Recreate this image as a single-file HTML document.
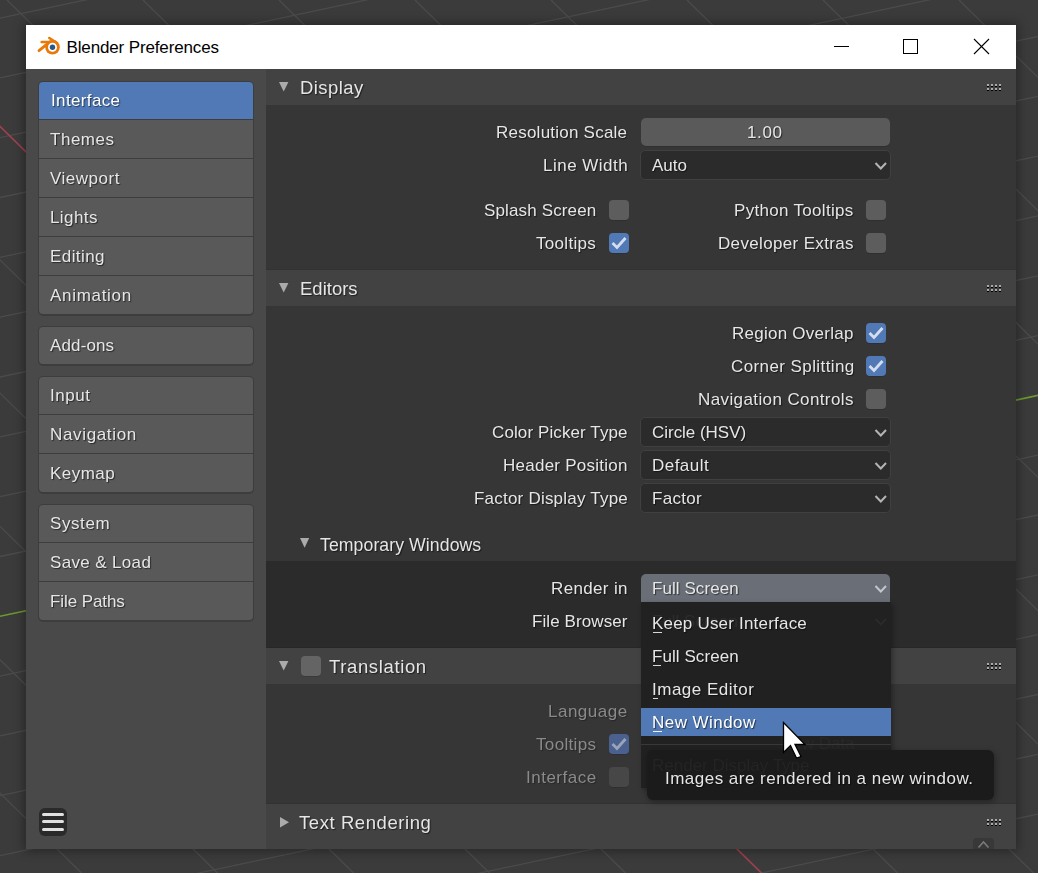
<!DOCTYPE html>
<html><head><meta charset="utf-8">
<style>
*{margin:0;padding:0;box-sizing:border-box}
html,body{width:1038px;height:873px;overflow:hidden;background:#3b3b3b;font-family:"Liberation Sans",sans-serif}
div{position:absolute}
#bg{position:absolute;left:0;top:0}
.t{color:#e6e6e6;font-size:17px;line-height:30px;height:28px;white-space:nowrap;will-change:transform;text-shadow:1px 1px 1px rgba(0,0,0,.55)}
.r{text-align:right}
.tab{left:39px;width:214px;background:#595959}
.grp{left:38px;width:216px;background:#3d3d3d;border-radius:5px}
.hdr{left:266px;width:750px;height:36px;background:#424242}
.tri{width:0;height:0;border-left:4.7px solid transparent;border-right:4.7px solid transparent;border-top:9.4px solid #ababab}
.trr{width:0;height:0;border-top:5px solid transparent;border-bottom:5px solid transparent;border-left:9px solid #ababab}
.dd{left:640px;width:251px;height:30px;margin-top:-1px;background:#2b2b2b;border:1px solid #404040;border-radius:5px}
.sl{left:641px;width:249px;height:28px;background:#5a5a5a;border-radius:5px;box-shadow:0 1px 0 rgba(0,0,0,.12)}
.cb{width:20px;height:20px;background:#5d5d5d;border-radius:4px;box-shadow:0 1px 0 rgba(0,0,0,.12)}
.cbx{background:#5079b5}
</style></head><body>
<svg id="bg" width="1038" height="873">
<line x1="0" y1="18.1" x2="1038" y2="-202.8" stroke="#4b4b4b" stroke-width="1.3"/>
<line x1="0" y1="77.9" x2="1038" y2="-143.0" stroke="#4b4b4b" stroke-width="1.3"/>
<line x1="0" y1="137.7" x2="1038" y2="-83.2" stroke="#4b4b4b" stroke-width="1.3"/>
<line x1="0" y1="197.5" x2="1038" y2="-23.3" stroke="#4b4b4b" stroke-width="1.3"/>
<line x1="0" y1="257.4" x2="1038" y2="36.5" stroke="#4b4b4b" stroke-width="1.3"/>
<line x1="0" y1="317.2" x2="1038" y2="96.3" stroke="#4b4b4b" stroke-width="1.3"/>
<line x1="0" y1="377.0" x2="1038" y2="156.1" stroke="#4b4b4b" stroke-width="1.3"/>
<line x1="0" y1="436.8" x2="1038" y2="215.9" stroke="#4b4b4b" stroke-width="1.3"/>
<line x1="0" y1="496.6" x2="1038" y2="275.8" stroke="#4b4b4b" stroke-width="1.3"/>
<line x1="0" y1="556.5" x2="1038" y2="335.6" stroke="#4b4b4b" stroke-width="1.3"/>
<line x1="0" y1="616.3" x2="1038" y2="395.4" stroke="#6c9a2c" stroke-width="1.6"/>
<line x1="0" y1="676.1" x2="1038" y2="455.2" stroke="#4b4b4b" stroke-width="1.3"/>
<line x1="0" y1="735.9" x2="1038" y2="515.0" stroke="#4b4b4b" stroke-width="1.3"/>
<line x1="0" y1="795.7" x2="1038" y2="574.9" stroke="#4b4b4b" stroke-width="1.3"/>
<line x1="0" y1="855.6" x2="1038" y2="634.7" stroke="#4b4b4b" stroke-width="1.3"/>
<line x1="0" y1="915.4" x2="1038" y2="694.5" stroke="#4b4b4b" stroke-width="1.3"/>
<line x1="0" y1="975.2" x2="1038" y2="754.3" stroke="#4b4b4b" stroke-width="1.3"/>
<line x1="0" y1="1035.0" x2="1038" y2="814.1" stroke="#4b4b4b" stroke-width="1.3"/>
<line x1="0" y1="1094.8" x2="1038" y2="874.0" stroke="#4b4b4b" stroke-width="1.3"/>
<line x1="0" y1="1154.7" x2="1038" y2="933.8" stroke="#4b4b4b" stroke-width="1.3"/>
<line x1="-1081.0" y1="0" x2="-190.5" y2="873" stroke="#4b4b4b" stroke-width="1.3"/>
<line x1="-945.0" y1="0" x2="-54.5" y2="873" stroke="#4b4b4b" stroke-width="1.3"/>
<line x1="-809.0" y1="0" x2="81.5" y2="873" stroke="#4b4b4b" stroke-width="1.3"/>
<line x1="-673.0" y1="0" x2="217.5" y2="873" stroke="#4b4b4b" stroke-width="1.3"/>
<line x1="-537.0" y1="0" x2="353.5" y2="873" stroke="#4b4b4b" stroke-width="1.3"/>
<line x1="-401.0" y1="0" x2="489.5" y2="873" stroke="#4b4b4b" stroke-width="1.3"/>
<line x1="-265.0" y1="0" x2="625.5" y2="873" stroke="#4b4b4b" stroke-width="1.3"/>
<line x1="-129.0" y1="0" x2="761.5" y2="873" stroke="#a04050" stroke-width="1.6"/>
<line x1="7.0" y1="0" x2="897.5" y2="873" stroke="#4b4b4b" stroke-width="1.3"/>
<line x1="143.0" y1="0" x2="1033.5" y2="873" stroke="#4b4b4b" stroke-width="1.3"/>
<line x1="279.0" y1="0" x2="1169.5" y2="873" stroke="#4b4b4b" stroke-width="1.3"/>
<line x1="415.0" y1="0" x2="1305.5" y2="873" stroke="#4b4b4b" stroke-width="1.3"/>
<line x1="551.0" y1="0" x2="1441.5" y2="873" stroke="#4b4b4b" stroke-width="1.3"/>
<line x1="687.0" y1="0" x2="1577.5" y2="873" stroke="#4b4b4b" stroke-width="1.3"/>
<line x1="823.0" y1="0" x2="1713.5" y2="873" stroke="#4b4b4b" stroke-width="1.3"/>
<line x1="959.0" y1="0" x2="1849.5" y2="873" stroke="#4b4b4b" stroke-width="1.3"/>

</svg>
<div style="left:26px;top:25px;width:990px;height:824px;background:#494949;box-shadow:0 0 10px 2px rgba(0,0,0,.35)"></div>
<div style="left:26px;top:25px;width:990px;height:44px;background:#ffffff"></div>
<svg style="position:absolute;left:34px;top:33px" width="30" height="26" viewBox="34 33 30 26">
  <g stroke="#e97a0a" stroke-linecap="round" fill="#e97a0a">
  <line x1="49.3" y1="38" x2="57" y2="43.2" stroke-width="2.6"/>
  <line x1="41.6" y1="41.9" x2="52" y2="41.9" stroke-width="2.5"/>
  <line x1="39" y1="50.7" x2="47" y2="44.2" stroke-width="2.8"/>
  <polygon points="49,40.7 55.5,40.4 59.5,45 51,46" stroke="none"/>
  <circle cx="52.5" cy="47.3" r="7.3" stroke="none"/>
  </g>
  <circle cx="52.5" cy="47.3" r="4.5" fill="#ffffff"/>
  <circle cx="52.5" cy="47.3" r="2.7" fill="#255a8e"/>
</svg>
<div class="ttl" style="left:66.50px;top:35px;font-size:17px;letter-spacing:-0.139px;line-height:26px;height:26px;color:#000;font-size:17px;color:#000;white-space:nowrap">Blender Preferences</div>
<svg style="position:absolute;left:826px;top:30px" width="190" height="34" viewBox="826 30 190 34">
  <line x1="834" y1="46.5" x2="849" y2="46.5" stroke="#000" stroke-width="1"/>
  <rect x="903.5" y="39.5" width="14" height="14" fill="none" stroke="#000" stroke-width="1"/>
  <line x1="974" y1="39" x2="989" y2="54" stroke="#000" stroke-width="1.1"/>
  <line x1="989" y1="39" x2="974" y2="54" stroke="#000" stroke-width="1.1"/>
</svg>
<div class="grp" style="top:81px;height:235px"></div>
<div class="tab" style="top:82px;height:37px;border-radius:4px 4px 0 0;background:#5079b5;"></div>
<div class="t" style="left:50.50px;top:86px;font-size:17px;letter-spacing:0.363px;line-height:30px;height:28px;color:#fff;">Interface</div>
<div class="tab" style="top:120px;height:38px;border-radius:0 0 0 0;"></div>
<div class="t" style="left:50.30px;top:125px;font-size:17px;letter-spacing:0.520px;line-height:30px;height:28px;">Themes</div>
<div class="tab" style="top:159px;height:38px;border-radius:0 0 0 0;"></div>
<div class="t" style="left:50.30px;top:164px;font-size:17px;letter-spacing:0.514px;line-height:30px;height:28px;">Viewport</div>
<div class="tab" style="top:198px;height:38px;border-radius:0 0 0 0;"></div>
<div class="t" style="left:50.20px;top:203px;font-size:17px;letter-spacing:0.420px;line-height:30px;height:28px;">Lights</div>
<div class="tab" style="top:237px;height:38px;border-radius:0 0 0 0;"></div>
<div class="t" style="left:50.00px;top:242px;font-size:17px;letter-spacing:0.433px;line-height:30px;height:28px;">Editing</div>
<div class="tab" style="top:276px;height:38px;border-radius:0 0 4px 4px;"></div>
<div class="t" style="left:50.30px;top:281px;font-size:17px;letter-spacing:0.688px;line-height:30px;height:28px;">Animation</div>
<div class="grp" style="top:326px;height:40px"></div>
<div class="tab" style="top:327px;height:37px;border-radius:4px 4px 4px 4px;"></div>
<div class="t" style="left:50.30px;top:331px;font-size:17px;letter-spacing:0.133px;line-height:30px;height:28px;">Add-ons</div>
<div class="grp" style="top:376px;height:118px"></div>
<div class="tab" style="top:377px;height:37px;border-radius:4px 4px 0 0;"></div>
<div class="t" style="left:49.80px;top:381px;font-size:17px;letter-spacing:0.550px;line-height:30px;height:28px;">Input</div>
<div class="tab" style="top:415px;height:38px;border-radius:0 0 0 0;"></div>
<div class="t" style="left:49.80px;top:420px;font-size:17px;letter-spacing:0.656px;line-height:30px;height:28px;">Navigation</div>
<div class="tab" style="top:454px;height:38px;border-radius:0 0 4px 4px;"></div>
<div class="t" style="left:49.80px;top:459px;font-size:17px;letter-spacing:0.460px;line-height:30px;height:28px;">Keymap</div>
<div class="grp" style="top:504px;height:118px"></div>
<div class="tab" style="top:505px;height:37px;border-radius:4px 4px 0 0;"></div>
<div class="t" style="left:49.50px;top:509px;font-size:17px;letter-spacing:0.580px;line-height:30px;height:28px;">System</div>
<div class="tab" style="top:543px;height:38px;border-radius:0 0 0 0;"></div>
<div class="t" style="left:49.50px;top:548px;font-size:17px;letter-spacing:0.350px;line-height:30px;height:28px;">Save &amp; Load</div>
<div class="tab" style="top:582px;height:38px;border-radius:0 0 4px 4px;"></div>
<div class="t" style="left:49.80px;top:587px;font-size:17px;letter-spacing:-0.089px;line-height:30px;height:28px;">File Paths</div>
<div style="left:39px;top:808px;width:28px;height:28px;background:#2a2a2a;border-radius:6px"></div>
<div style="left:42px;top:813px;width:22px;height:3px;background:#e0e0e0;border-radius:2px"></div>
<div style="left:42px;top:820px;width:22px;height:3px;background:#e0e0e0;border-radius:2px"></div>
<div style="left:42px;top:828px;width:22px;height:3px;background:#e0e0e0;border-radius:2px"></div>
<div style="left:266px;top:69px;width:750px;height:780px;background:#363636"></div>
<div class="hdr" style="top:69px"></div><svg style="position:absolute;left:278px;top:81px" width="11" height="12"><polygon points="1,1 10.40,1 5.70,10.50" fill="#ababab"/></svg>
<div class="t ht" style="left:299.70px;top:69px;font-size:18.5px;letter-spacing:0.433px;line-height:38px;height:36px;">Display</div>
<div class="t" style="left:495.90px;top:118px;font-size:17px;letter-spacing:0.233px;line-height:30px;height:28px;">Resolution Scale</div>
<div class="sl" style="top:118px"></div>
<div class="t" style="left:746.90px;top:118px;font-size:17px;letter-spacing:0.633px;line-height:30px;height:28px;">1.00</div>
<div class="t" style="left:543.00px;top:151px;font-size:17px;letter-spacing:0.489px;line-height:30px;height:28px;">Line Width</div>
<div class="dd" style="top:151px"></div>
<div class="t" style="left:652.40px;top:151px;font-size:17px;letter-spacing:0.000px;line-height:30px;height:28px;">Auto</div>
<svg style="position:absolute;left:872px;top:160px" width="16" height="12"><path d="M3.5 3 L8.8 8.5 L14 3" fill="none" stroke="#b4b4b4" stroke-width="2"/></svg>
<div class="t" style="left:483.60px;top:196px;font-size:17px;letter-spacing:0.142px;line-height:30px;height:28px;">Splash Screen</div>
<div class="cb" style="left:609px;top:200px;"></div>
<div class="t" style="left:733.50px;top:196px;font-size:17px;letter-spacing:0.307px;line-height:30px;height:28px;">Python Tooltips</div>
<div class="cb" style="left:866px;top:200px;"></div>
<div class="t" style="left:536.10px;top:229px;font-size:17px;letter-spacing:0.314px;line-height:30px;height:28px;">Tooltips</div>
<div class="cb cbx" style="left:609px;top:233px;"></div><svg style="position:absolute;left:609px;top:233px" width="20" height="20"><path d="M3.5 10 L8 14.5 L16.5 5" fill="none" stroke="#d4ddef" stroke-width="2.8"/></svg>
<div class="t" style="left:717.60px;top:229px;font-size:17px;letter-spacing:0.347px;line-height:30px;height:28px;">Developer Extras</div>
<div class="cb" style="left:866px;top:233px;"></div>
<div style="left:266px;top:269px;width:750px;height:1px;background:#323232"></div>
<div class="hdr" style="top:270px"></div><svg style="position:absolute;left:278px;top:282px" width="11" height="12"><polygon points="1,1 10.40,1 5.70,10.50" fill="#ababab"/></svg>
<div class="t ht" style="left:299.50px;top:270px;font-size:18.5px;letter-spacing:0.000px;line-height:38px;height:36px;">Editors</div>
<div class="t" style="left:731.50px;top:319px;font-size:17px;letter-spacing:0.254px;line-height:30px;height:28px;">Region Overlap</div>
<div class="cb cbx" style="left:866px;top:323px;"></div><svg style="position:absolute;left:866px;top:323px" width="20" height="20"><path d="M3.5 10 L8 14.5 L16.5 5" fill="none" stroke="#d4ddef" stroke-width="2.8"/></svg>
<div class="t" style="left:730.70px;top:352px;font-size:17px;letter-spacing:0.407px;line-height:30px;height:28px;">Corner Splitting</div>
<div class="cb cbx" style="left:866px;top:356px;"></div><svg style="position:absolute;left:866px;top:356px" width="20" height="20"><path d="M3.5 10 L8 14.5 L16.5 5" fill="none" stroke="#d4ddef" stroke-width="2.8"/></svg>
<div class="t" style="left:697.70px;top:385px;font-size:17px;letter-spacing:0.394px;line-height:30px;height:28px;">Navigation Controls</div>
<div class="cb" style="left:866px;top:389px;"></div>
<div class="t" style="left:491.70px;top:418px;font-size:17px;letter-spacing:0.106px;line-height:30px;height:28px;">Color Picker Type</div>
<div class="dd" style="top:418px"></div>
<div class="t" style="left:651.80px;top:418px;font-size:17px;letter-spacing:-0.027px;line-height:30px;height:28px;">Circle (HSV)</div>
<svg style="position:absolute;left:872px;top:427px" width="16" height="12"><path d="M3.5 3 L8.8 8.5 L14 3" fill="none" stroke="#b4b4b4" stroke-width="2"/></svg>
<div class="t" style="left:502.90px;top:451px;font-size:17px;letter-spacing:0.250px;line-height:30px;height:28px;">Header Position</div>
<div class="dd" style="top:451px"></div>
<div class="t" style="left:651.80px;top:451px;font-size:17px;letter-spacing:0.467px;line-height:30px;height:28px;">Default</div>
<svg style="position:absolute;left:872px;top:460px" width="16" height="12"><path d="M3.5 3 L8.8 8.5 L14 3" fill="none" stroke="#b4b4b4" stroke-width="2"/></svg>
<div class="t" style="left:473.50px;top:484px;font-size:17px;letter-spacing:0.217px;line-height:30px;height:28px;">Factor Display Type</div>
<div class="dd" style="top:484px"></div>
<div class="t" style="left:651.80px;top:484px;font-size:17px;letter-spacing:0.300px;line-height:30px;height:28px;">Factor</div>
<svg style="position:absolute;left:872px;top:493px" width="16" height="12"><path d="M3.5 3 L8.8 8.5 L14 3" fill="none" stroke="#b4b4b4" stroke-width="2"/></svg>
<svg style="position:absolute;left:299.3px;top:537px" width="11" height="12"><polygon points="1,1 10.20,1 5.60,10.70" fill="#ababab"/></svg>
<div class="t" style="left:320.20px;top:530px;font-size:17.7px;letter-spacing:0.062px;line-height:30px;height:28px;">Temporary Windows</div>
<div style="left:266px;top:561px;width:750px;height:87px;background:#2b2b2b"></div>
<div class="t" style="left:550.70px;top:574px;font-size:17px;letter-spacing:0.350px;line-height:30px;height:28px;">Render in</div>
<div class="t" style="left:531.50px;top:607px;font-size:17px;letter-spacing:0.091px;line-height:30px;height:28px;">File Browser</div>
<div style="left:266px;top:647px;width:750px;height:1px;background:#272727"></div>
<div class="hdr" style="top:648px"></div><svg style="position:absolute;left:278px;top:660px" width="11" height="12"><polygon points="1,1 10.40,1 5.70,10.50" fill="#ababab"/></svg>
<div class="cb" style="left:301px;top:656px;background:#646464"></div>
<div class="t ht" style="left:329.40px;top:648px;font-size:18.5px;letter-spacing:0.630px;line-height:38px;height:36px;">Translation</div>
<div class="t" style="left:548.00px;top:697px;font-size:17px;letter-spacing:0.500px;line-height:30px;height:28px;color:#8a8a8a;text-shadow:1px 1px 1px rgba(0,0,0,.3);">Language</div>
<div class="t" style="left:536.30px;top:730px;font-size:17px;letter-spacing:0.343px;line-height:30px;height:28px;color:#8a8a8a;text-shadow:1px 1px 1px rgba(0,0,0,.3);">Tooltips</div>
<div class="cb cbx" style="left:609px;top:734px;background:#4a6190"></div><svg style="position:absolute;left:609px;top:734px" width="20" height="20"><path d="M3.5 10 L8 14.5 L16.5 5" fill="none" stroke="#9aa4b6" stroke-width="2.8"/></svg>
<div class="t" style="left:525.70px;top:763px;font-size:17px;letter-spacing:0.500px;line-height:30px;height:28px;color:#8a8a8a;text-shadow:1px 1px 1px rgba(0,0,0,.3);">Interface</div>
<div class="cb" style="left:609px;top:767px;background:#474747"></div>
<div style="left:266px;top:803px;width:750px;height:1px;background:#323232"></div>
<div class="hdr" style="top:804px;height:45px"></div><svg style="position:absolute;left:279px;top:816px" width="11" height="12"><polygon points="1,1 1,11.5 10,6.25" fill="#ababab"/></svg>
<div class="t ht" style="left:299.30px;top:804px;font-size:18.5px;letter-spacing:0.569px;line-height:38px;height:36px;">Text Rendering</div>
<div style="left:987px;top:84px;width:2px;height:2px;background:#aaa"></div><div style="left:987px;top:86px;width:2px;height:1px;background:#000"></div><div style="left:991px;top:84px;width:2px;height:2px;background:#aaa"></div><div style="left:991px;top:86px;width:2px;height:1px;background:#000"></div><div style="left:995px;top:84px;width:2px;height:2px;background:#aaa"></div><div style="left:995px;top:86px;width:2px;height:1px;background:#000"></div><div style="left:999px;top:84px;width:2px;height:2px;background:#aaa"></div><div style="left:999px;top:86px;width:2px;height:1px;background:#000"></div><div style="left:987px;top:88px;width:2px;height:2px;background:#aaa"></div><div style="left:987px;top:90px;width:2px;height:1px;background:#000"></div><div style="left:991px;top:88px;width:2px;height:2px;background:#aaa"></div><div style="left:991px;top:90px;width:2px;height:1px;background:#000"></div><div style="left:995px;top:88px;width:2px;height:2px;background:#aaa"></div><div style="left:995px;top:90px;width:2px;height:1px;background:#000"></div><div style="left:999px;top:88px;width:2px;height:2px;background:#aaa"></div><div style="left:999px;top:90px;width:2px;height:1px;background:#000"></div>
<div style="left:987px;top:285px;width:2px;height:2px;background:#aaa"></div><div style="left:987px;top:287px;width:2px;height:1px;background:#000"></div><div style="left:991px;top:285px;width:2px;height:2px;background:#aaa"></div><div style="left:991px;top:287px;width:2px;height:1px;background:#000"></div><div style="left:995px;top:285px;width:2px;height:2px;background:#aaa"></div><div style="left:995px;top:287px;width:2px;height:1px;background:#000"></div><div style="left:999px;top:285px;width:2px;height:2px;background:#aaa"></div><div style="left:999px;top:287px;width:2px;height:1px;background:#000"></div><div style="left:987px;top:289px;width:2px;height:2px;background:#aaa"></div><div style="left:987px;top:291px;width:2px;height:1px;background:#000"></div><div style="left:991px;top:289px;width:2px;height:2px;background:#aaa"></div><div style="left:991px;top:291px;width:2px;height:1px;background:#000"></div><div style="left:995px;top:289px;width:2px;height:2px;background:#aaa"></div><div style="left:995px;top:291px;width:2px;height:1px;background:#000"></div><div style="left:999px;top:289px;width:2px;height:2px;background:#aaa"></div><div style="left:999px;top:291px;width:2px;height:1px;background:#000"></div>
<div style="left:987px;top:663px;width:2px;height:2px;background:#aaa"></div><div style="left:987px;top:665px;width:2px;height:1px;background:#000"></div><div style="left:991px;top:663px;width:2px;height:2px;background:#aaa"></div><div style="left:991px;top:665px;width:2px;height:1px;background:#000"></div><div style="left:995px;top:663px;width:2px;height:2px;background:#aaa"></div><div style="left:995px;top:665px;width:2px;height:1px;background:#000"></div><div style="left:999px;top:663px;width:2px;height:2px;background:#aaa"></div><div style="left:999px;top:665px;width:2px;height:1px;background:#000"></div><div style="left:987px;top:667px;width:2px;height:2px;background:#aaa"></div><div style="left:987px;top:669px;width:2px;height:1px;background:#000"></div><div style="left:991px;top:667px;width:2px;height:2px;background:#aaa"></div><div style="left:991px;top:669px;width:2px;height:1px;background:#000"></div><div style="left:995px;top:667px;width:2px;height:2px;background:#aaa"></div><div style="left:995px;top:669px;width:2px;height:1px;background:#000"></div><div style="left:999px;top:667px;width:2px;height:2px;background:#aaa"></div><div style="left:999px;top:669px;width:2px;height:1px;background:#000"></div>
<div style="left:987px;top:819px;width:2px;height:2px;background:#aaa"></div><div style="left:987px;top:821px;width:2px;height:1px;background:#000"></div><div style="left:991px;top:819px;width:2px;height:2px;background:#aaa"></div><div style="left:991px;top:821px;width:2px;height:1px;background:#000"></div><div style="left:995px;top:819px;width:2px;height:2px;background:#aaa"></div><div style="left:995px;top:821px;width:2px;height:1px;background:#000"></div><div style="left:999px;top:819px;width:2px;height:2px;background:#aaa"></div><div style="left:999px;top:821px;width:2px;height:1px;background:#000"></div><div style="left:987px;top:823px;width:2px;height:2px;background:#aaa"></div><div style="left:987px;top:825px;width:2px;height:1px;background:#000"></div><div style="left:991px;top:823px;width:2px;height:2px;background:#aaa"></div><div style="left:991px;top:825px;width:2px;height:1px;background:#000"></div><div style="left:995px;top:823px;width:2px;height:2px;background:#aaa"></div><div style="left:995px;top:825px;width:2px;height:1px;background:#000"></div><div style="left:999px;top:823px;width:2px;height:2px;background:#aaa"></div><div style="left:999px;top:825px;width:2px;height:1px;background:#000"></div>
<div style="left:973px;top:838px;width:21px;height:11px;background:#383838;border-radius:4px 4px 0 0"></div>
<svg style="position:absolute;left:973px;top:838px" width="21" height="11"><path d="M5.5 9.5 L10.5 4 L15.5 9.5" fill="none" stroke="#7a7a7a" stroke-width="1.6"/></svg>
<div style="left:641px;top:574px;width:249px;height:28px;background:#696e77;border-radius:5px 5px 0 0"></div>
<div class="t" style="left:651.80px;top:574px;font-size:17px;letter-spacing:0.070px;line-height:30px;height:28px;">Full Screen</div>
<svg style="position:absolute;left:872px;top:583px" width="16" height="12"><path d="M3.5 3 L8.8 8.5 L14 3" fill="none" stroke="#c4c6ca" stroke-width="2"/></svg>
<div style="left:641px;top:602px;width:250px;height:186px;background:#212121;box-shadow:2px 2px 5px rgba(0,0,0,.3)"></div>
<div class="t" style="left:652px;top:607px;color:#2d2d2d;text-shadow:none">Full Screen</div>
<div class="t r" style="right:183px;top:729px;color:#282828;text-shadow:none">New Data</div>
<div style="left:641px;top:744px;width:250px;height:1px;background:#383838"></div>
<svg style="position:absolute;left:872px;top:616px" width="16" height="12"><path d="M3.5 3 L8.8 8.5 L14 3" fill="none" stroke="#2a2a2a" stroke-width="2"/></svg>
<div class="t" style="left:651.70px;top:609px;font-size:17px;letter-spacing:0.200px;line-height:30px;height:28px;">Keep User Interface</div>
<div style="left:653px;top:632px;width:9px;height:1.2px;background:#d8d8d8"></div>
<div class="t" style="left:651.80px;top:642px;font-size:17px;letter-spacing:0.070px;line-height:30px;height:28px;">Full Screen</div>
<div style="left:653px;top:665px;width:8px;height:1.2px;background:#d8d8d8"></div>
<div class="t" style="left:651.80px;top:675px;font-size:17px;letter-spacing:0.500px;line-height:30px;height:28px;">Image Editor</div>
<div style="left:653px;top:698px;width:5px;height:1.2px;background:#d8d8d8"></div>
<div style="left:641px;top:708px;width:250px;height:28px;background:#5079b5"></div>
<div class="t" style="left:651.80px;top:708px;font-size:17px;letter-spacing:0.456px;line-height:30px;height:28px;color:#fff;">New Window</div>
<div style="left:653px;top:731px;width:9px;height:1.2px;background:#f0f0f0"></div>
<div style="left:647px;top:750px;width:347px;height:50px;background:#1b1b1b;border-radius:6px;box-shadow:1px 2px 6px rgba(0,0,0,.35)"></div>
<div class="t" style="left:652px;top:751px;color:#242424;text-shadow:none">Render Display Type</div>
<div class="t" style="left:664.50px;top:764px;font-size:17px;letter-spacing:0.483px;line-height:30px;height:28px;">Images are rendered in a new window.</div>
<svg style="position:absolute;left:782px;top:721px" width="26" height="40" viewBox="0 0 26 40"><path d="M1.5 1.5 L1.5 31.5 L8.5 24.5 L14.5 37 L19 35.5 L13 23.5 L23 23.5 Z" fill="#fff" stroke="#000" stroke-width="1.3" stroke-linejoin="miter"/></svg>
</body></html>
